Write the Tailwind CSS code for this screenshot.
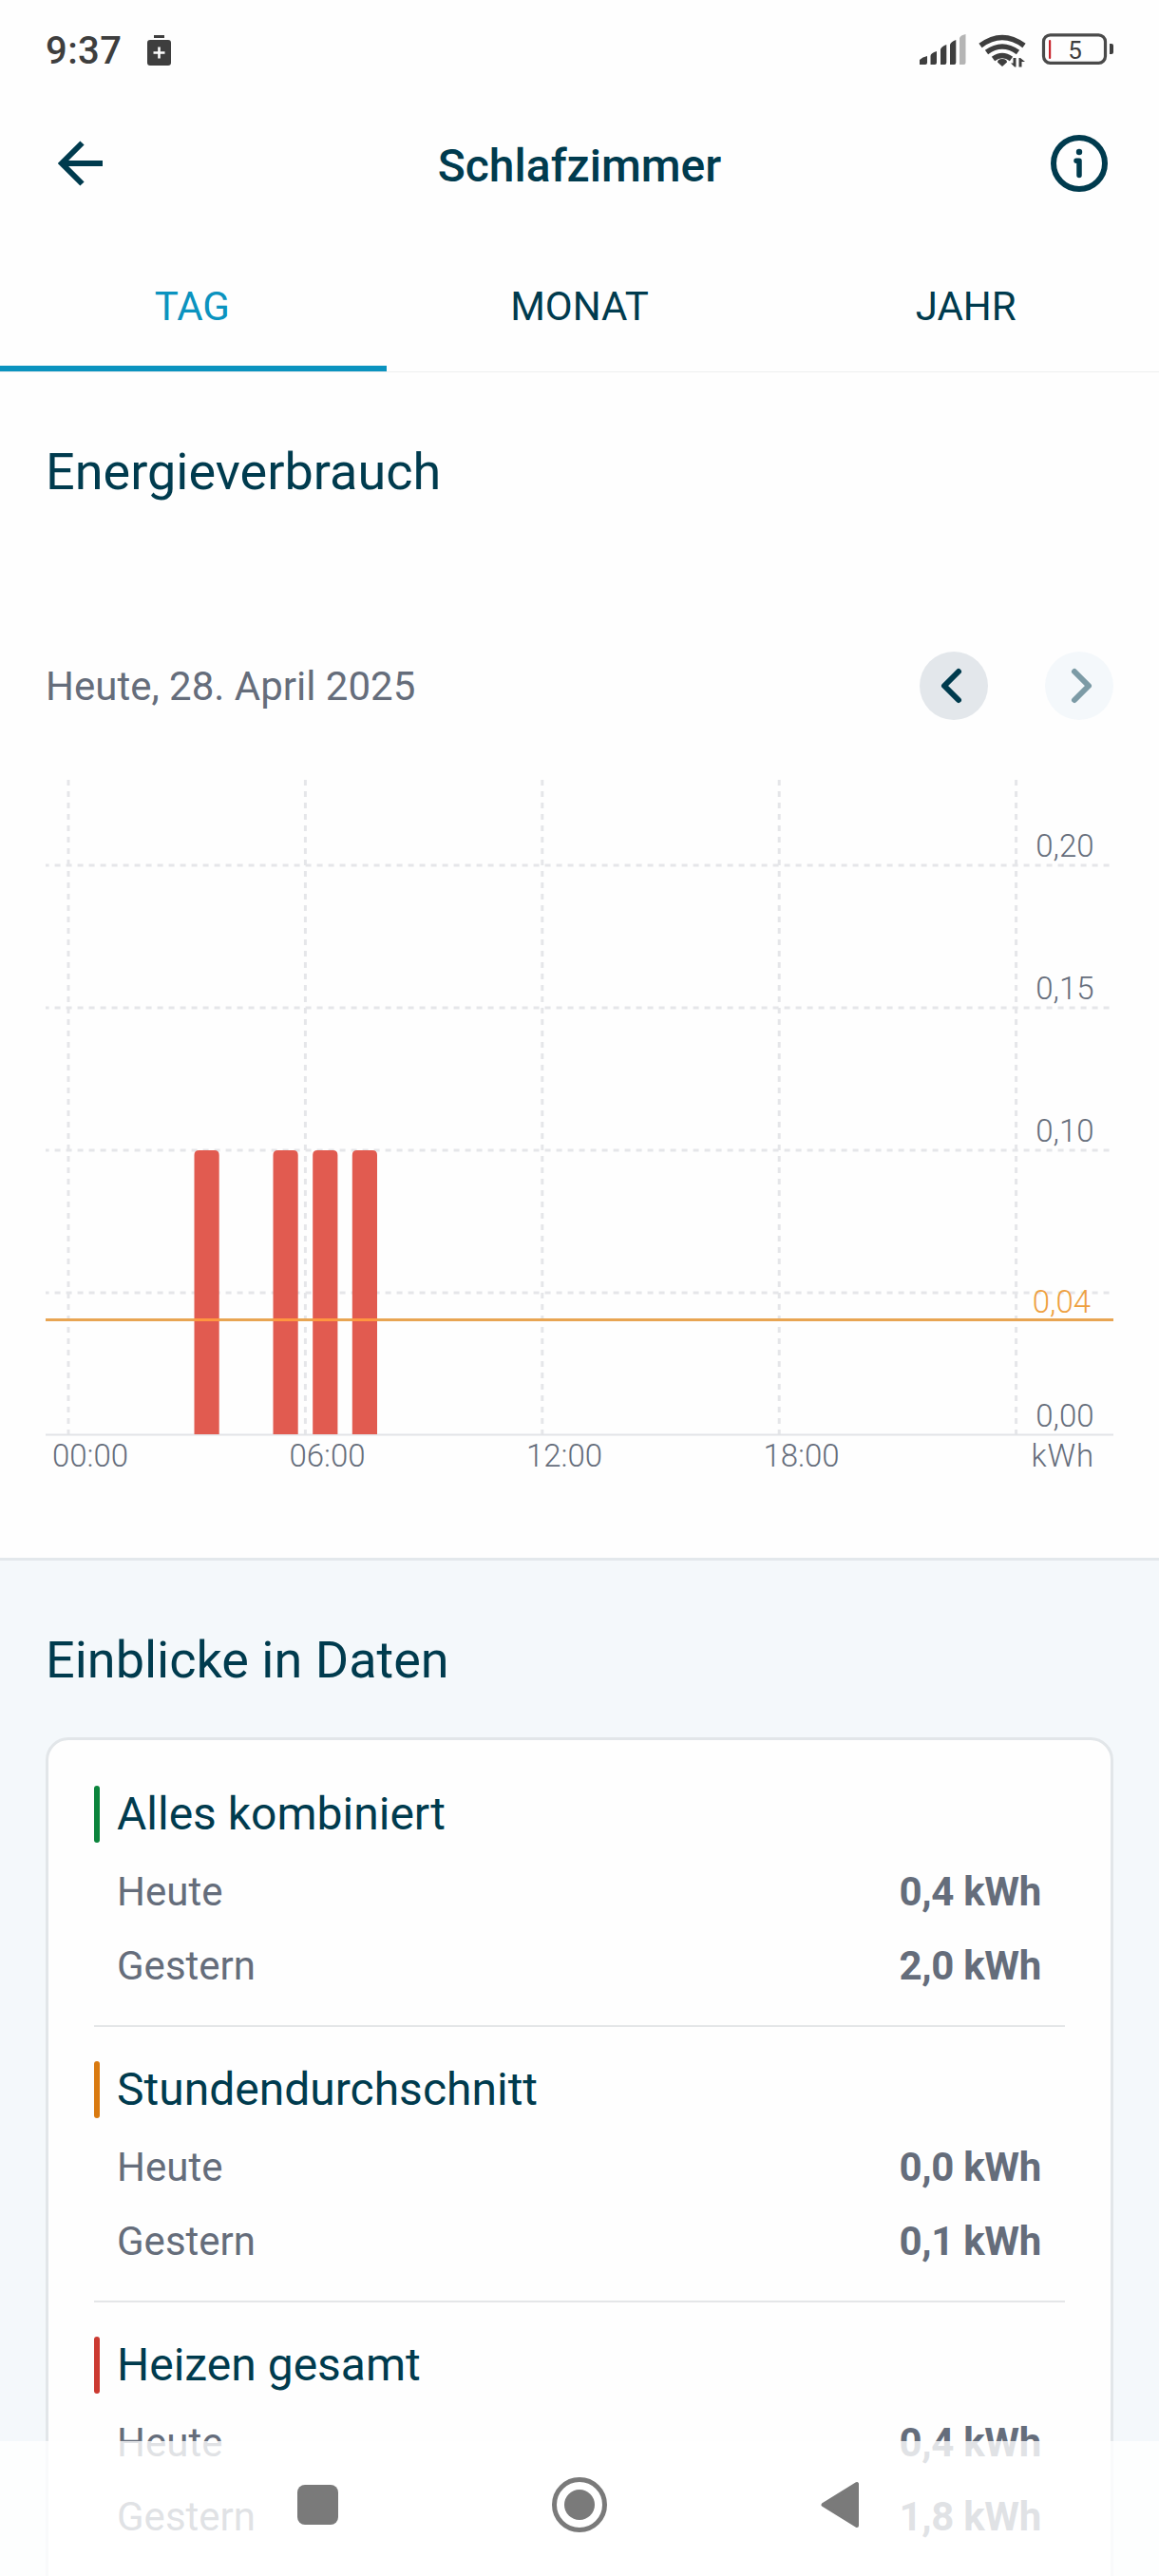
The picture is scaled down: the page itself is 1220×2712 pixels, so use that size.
<!DOCTYPE html>
<html lang="de">
  <head>
    <meta charset="UTF-8" />
    <meta name="viewport" content="width=device-width, initial-scale=1.0" />
    <title>Schlafzimmer – Energieverbrauch</title>
    <script src="https://cdn.jsdelivr.net/npm/@tailwindcss/browser@4"></script>
    <style>
      body {
        font-family: Roboto, sans-serif;
      }
    </style>
  </head>
  <body class="relative w-[1220px] h-[2712px] overflow-hidden bg-[#fefefe] text-[#003b4e]">
    <!-- Statusleiste -->
    <div class="h-[106px] pl-12 pr-[47px] flex items-center justify-between text-[#3e3e3e]">
      <div class="flex items-center gap-[27px]">
        <span class="pt-px text-[40px] leading-none font-medium tracking-[0.4px]">9:37</span>
        <svg class="w-[25px] h-[32px]" viewBox="0 0 25 32" fill="currentColor">
          <rect x="7" y="0" width="11" height="3" />
          <path fill-rule="evenodd" d="M3 5h19a3 3 0 0 1 3 3v21a3 3 0 0 1-3 3H3a3 3 0 0 1-3-3V8a3 3 0 0 1 3-3ZM11.2 12.5v4.700h-4.700v2.600h4.700v4.700h2.600v-4.700h4.700v-2.600h-4.700v-4.700Z" />
        </svg>
      </div>
      <svg class="w-[213px] h-[50px]" viewBox="960 27 213 50" fill="currentColor">
        <path d="M968 67v-5q3-3 8-4v7q0 2-2 2zM979.500 67v-9q0-3 6.500-5v12q0 2-2 2zM990 67V51q1-3 6.300-5v19q0 2-2 2zM1000 67V46q1-3 6.300-5v24q0 2-2 2z" />
        <path fill="#b5b5b5" d="M1010 67V39q1-3 6.500-4v30q0 2-2 2z" />
        <g fill="none" stroke="currentColor" stroke-width="5.500">
          <path d="M1032 47q23-17 46 0" />
          <path d="M1038.500 54q16.500-12 33 0" />
          <path d="M1045.500 61q9.500-7 19 0" />
        </g>
        <path d="M1055 69l-5-4.500q0-3.500 5-3.500t5 3.500z" />
        <path d="M1069.500 60v9.500h-1.500l-4-4h2.500V60zM1072.500 69.500V60h1.500l5 4h-3.500v5.500z" />
        <rect x="1098.500" y="35.800" width="65" height="29.500" rx="7" fill="none" stroke="#4a4a4a" stroke-width="3.200" />
        <rect x="1104" y="41" width="2.200" height="20" rx="1" fill="#c8232c" />
        <path d="M1168 45h2q2 0 2 2v7q0 2-2 2h-2z" />
        <text x="1131.500" y="61" font-size="26" text-anchor="middle">5</text>
      </svg>
    </div>

    <header class="h-[132px] pl-[60px] pr-[54px] flex items-center justify-between">
      <svg class="w-[50px] h-[50px]" viewBox="0 0 50 50" fill="none" stroke="currentColor" stroke-width="6">
        <path d="M48 25H5M26.500 3.500 5 25l21.500 21.500" />
      </svg>
      <h1 class="pt-[6px] pl-1 text-[48px] leading-none font-medium">Schlafzimmer</h1>
      <svg class="w-[60px] h-[60px]" viewBox="0 0 60 60" fill="none" stroke="currentColor">
        <circle cx="30" cy="30" r="27" stroke-width="6" />
        <path d="M27 27.200h3V42.500" stroke-width="5.500" stroke-linecap="round" stroke-linejoin="round" />
        <circle cx="30" cy="18" r="3.200" fill="currentColor" stroke="none" />
      </svg>
    </header>

    <nav class="h-[154px] grid grid-cols-3 border-b border-[#eeeff0] text-[42px] text-center">
      <a class="pt-[58px] pr-[2px] leading-[54px] text-[#0b93bf] border-b-6 border-[#0b93bf]">TAG</a>
      <a class="pt-[58px] leading-[54px]">MONAT</a>
      <a class="pt-[58px] leading-[54px]">JAHR</a>
    </nav>

    <main class="h-[1248px] px-12 pt-[73px]">
      <h2 class="text-[54px] leading-[64px]">Energieverbrauch</h2>

      <div class="mt-[157px] h-[72px] flex items-center justify-between">
        <span class="pt-[2px] text-[42px] leading-none text-[#656d7b]">Heute, 28. April 2025</span>
        <div class="flex gap-[60px]">
          <button class="w-[72px] h-[72px] rounded-full bg-[#e3e7eb] flex items-center justify-center">
            <svg class="w-[72px] h-[72px]" viewBox="0 0 72 72" fill="none" stroke="currentColor" stroke-width="6" stroke-linecap="round" stroke-linejoin="round">
              <path d="M41 21 26 36l15 15" />
            </svg>
          </button>
          <button class="w-[72px] h-[72px] rounded-full bg-[#f4f8fb] text-[#7c9ba6] flex items-center justify-center">
            <svg class="w-[72px] h-[72px]" viewBox="0 0 72 72" fill="none" stroke="currentColor" stroke-width="6" stroke-linecap="round" stroke-linejoin="round">
              <path d="M31 21l15 15-15 15" />
            </svg>
          </button>
        </div>
      </div>

      <!-- Diagramm -->
      <svg class="mt-[63px] w-[1124px] h-[740px]" viewBox="0 0 1124 740" fill="#656d7b" font-size="33" font-weight="300">
        <g stroke="#e5e6e9" stroke-width="3" stroke-dasharray="6 6">
          <path d="M24 0V689M273.400 0V689M522.800 0V689M772.200 0V689M1021.600 0V689" />
          <path stroke-dashoffset="2.400" d="M0 90H1124M0 240H1124M0 390H1124M0 540H1124" />
        </g>
        <path d="M0 689.500H1124" stroke="#e2e4e7" stroke-width="2" />
        <g fill="#e15b50">
          <path d="M156.500 689V395q0-5 5-5h16.200q5 0 5 5v294z" />
          <path d="M239.500 689V395q0-5 5-5h16.200q5 0 5 5v294z" />
          <path d="M281.200 689V395q0-5 5-5h16.200q5 0 5 5v294z" />
          <path d="M322.800 689V395q0-5 5-5h16.200q5 0 5 5v294z" />
        </g>
        <path d="M0 568.500H1124" stroke="#e8a553" stroke-width="3" />
        <path d="M156.500 568.500h26.200M239.500 568.500h26.200M281.200 568.500h26.200M322.800 568.500h26.200" stroke="#ff9640" stroke-width="3" />
        <g text-anchor="end">
          <text x="1103.500" y="80.500">0,20</text>
          <text x="1103.500" y="230.500">0,15</text>
          <text x="1103.500" y="380.500">0,10</text>
          <text x="1100" y="560.500" fill="#eea03f">0,04</text>
          <text x="1103.500" y="680.500">0,00</text>
          <text x="1104" y="723" letter-spacing="0.900">kWh</text>
        </g>
        <text x="7" y="723">00:00</text>
        <text x="256.500" y="723">06:00</text>
        <text x="506" y="723">12:00</text>
        <text x="755.500" y="723">18:00</text>
      </svg>
    </main>

    <section class="h-[1200px] px-12 pt-[73px] bg-[#f4f8fb] border-t-3 border-[#e3e8ec]">
      <h2 class="text-[54px] leading-[64px]">Einblicke in Daten</h2>

      <div class="mt-[49px] h-[960px] px-12 pt-12 bg-[#fefefe] border-3 border-[#e2e6e9] rounded-3xl">
        <div class="pb-[23px] border-b-2 border-[#e4e6e8]">
          <div class="h-[60px] flex items-center gap-[18px]">
            <span class="w-[6px] h-full rounded-full bg-[#0b843c]"></span>
            <h3 class="text-[48px] leading-[60px]">Alles kombiniert</h3>
          </div>
          <div class="mt-[13px] pl-6 pr-[25px] text-[42px] leading-[78px] text-[#656d7b]">
            <div class="flex justify-between"><span>Heute</span><span class="font-bold tracking-[-0.3px]">0,4 kWh</span></div>
            <div class="flex justify-between"><span>Gestern</span><span class="font-bold tracking-[-0.3px]">2,0 kWh</span></div>
          </div>
        </div>

        <div class="pt-9 pb-[23px] border-b-2 border-[#e4e6e8]">
          <div class="h-[60px] flex items-center gap-[18px]">
            <span class="w-[6px] h-full rounded-full bg-[#d97a10]"></span>
            <h3 class="text-[48px] leading-[60px]">Stundendurchschnitt</h3>
          </div>
          <div class="mt-[13px] pl-6 pr-[25px] text-[42px] leading-[78px] text-[#656d7b]">
            <div class="flex justify-between"><span>Heute</span><span class="font-bold tracking-[-0.3px]">0,0 kWh</span></div>
            <div class="flex justify-between"><span>Gestern</span><span class="font-bold tracking-[-0.3px]">0,1 kWh</span></div>
          </div>
        </div>

        <div class="pt-9">
          <div class="h-[60px] flex items-center gap-[18px]">
            <span class="w-[6px] h-full rounded-full bg-[#cb3a31]"></span>
            <h3 class="text-[48px] leading-[60px]">Heizen gesamt</h3>
          </div>
          <div class="mt-[13px] pl-6 pr-[25px] text-[42px] leading-[78px] text-[#656d7b]">
            <div class="flex justify-between"><span>Heute</span><span class="font-bold tracking-[-0.3px]">0,4 kWh</span></div>
            <div class="flex justify-between"><span>Gestern</span><span class="font-bold tracking-[-0.3px]">1,8 kWh</span></div>
          </div>
        </div>
      </div>
    </section>

    <!-- Navigationsleiste des Systems, halbtransparent über dem Inhalt -->
    <div class="absolute bottom-0 left-0 w-full h-[142px] pl-[313px] pr-[315px] pb-2 bg-white/80 text-[#7a7a7a] flex items-center justify-between">
      <span class="w-[43px] h-[42px] rounded-[8px] bg-[#7a7a7a]"></span>
      <svg class="w-[60px] h-[60px]" viewBox="0 0 60 60">
        <circle cx="30" cy="30" r="26.500" fill="none" stroke="currentColor" stroke-width="5" />
        <circle cx="30" cy="30" r="16" fill="currentColor" />
      </svg>
      <svg class="w-[41px] h-[50px]" viewBox="0 0 41 50" fill="currentColor" stroke="currentColor" stroke-width="4" stroke-linejoin="round">
        <path d="M38 3v44L2.500 25z" />
      </svg>
    </div>
  </body>
</html>
